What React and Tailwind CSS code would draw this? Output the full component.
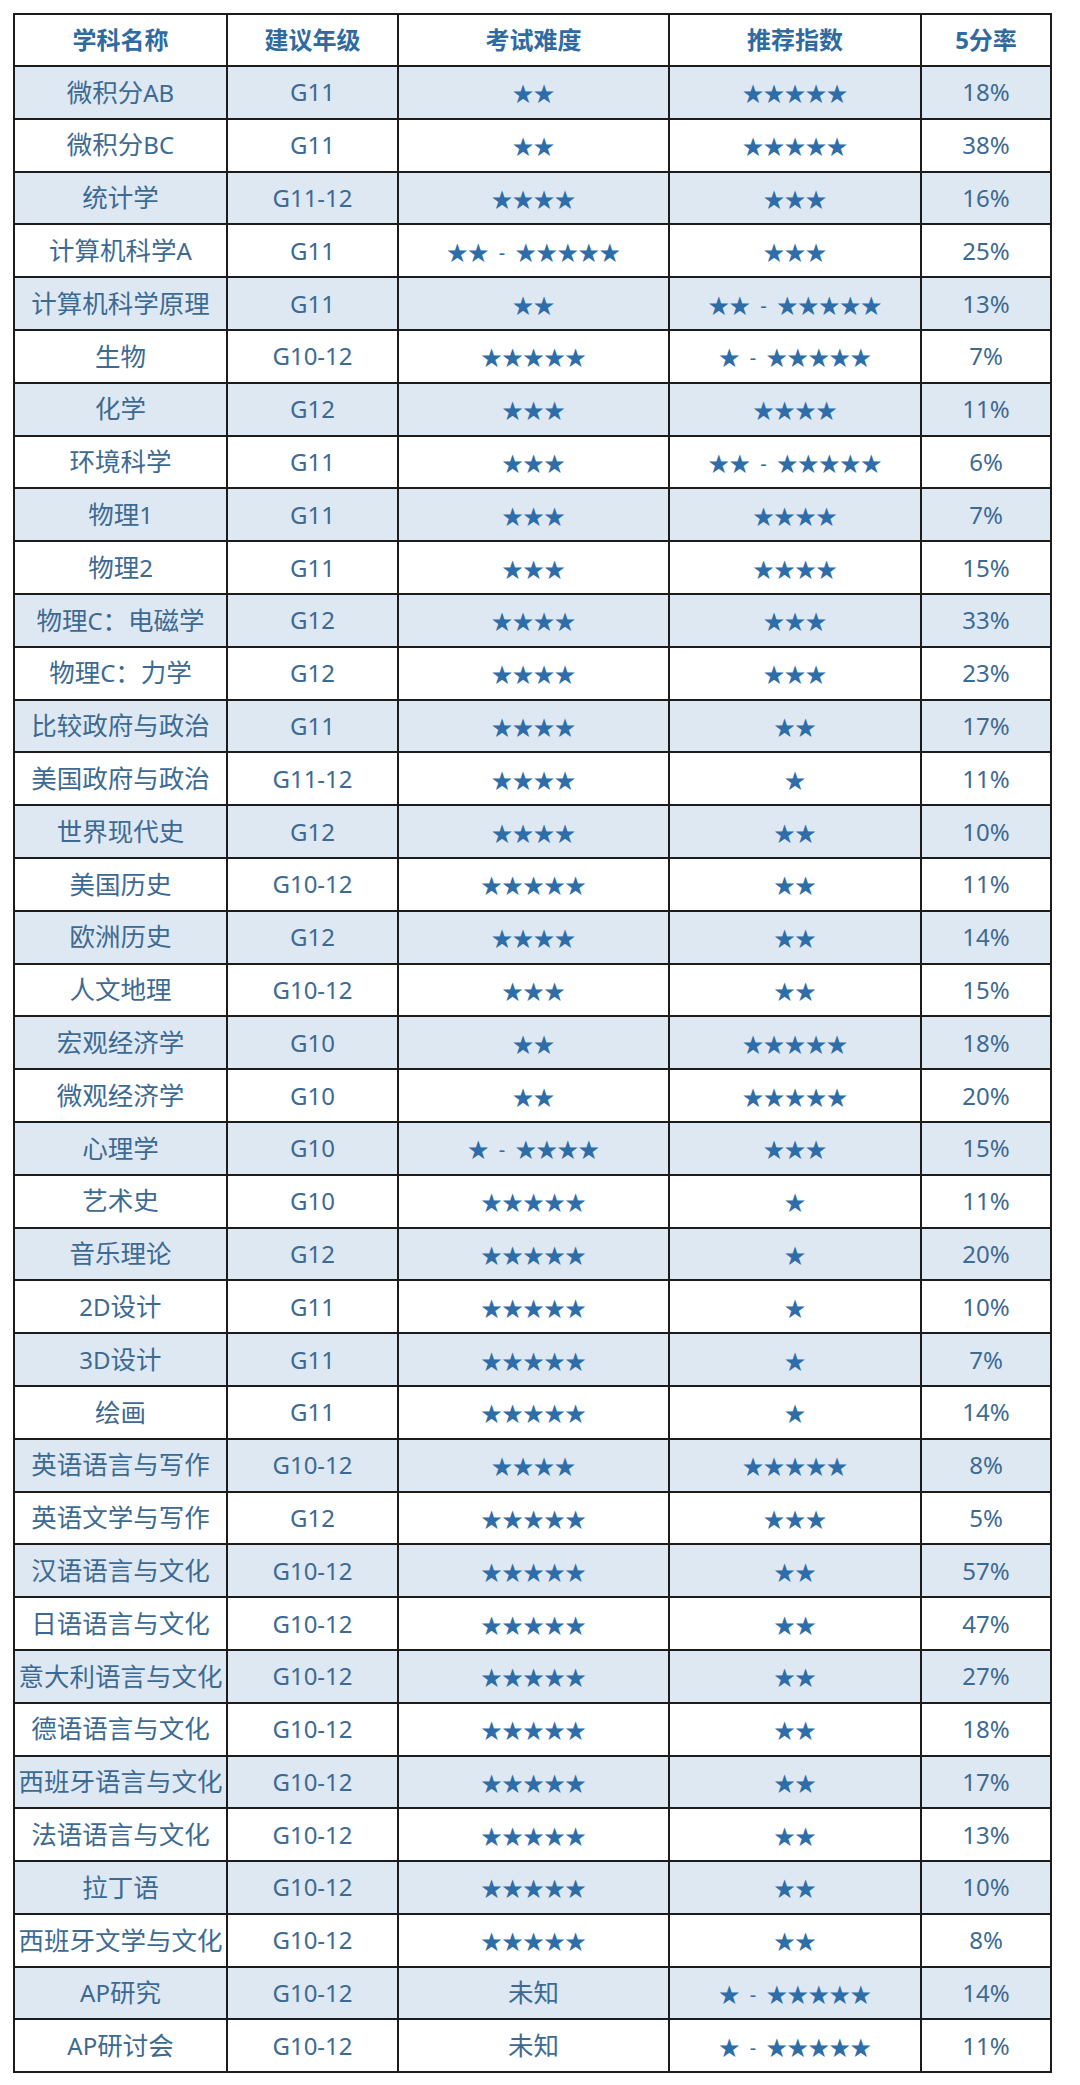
const rows = [
  ["微积分AB", "G11", "★★", "★★★★★", "18%"],
  ["微积分BC", "G11", "★★", "★★★★★", "38%"],
  ["统计学", "G11-12", "★★★★", "★★★", "16%"],
  ["计算机科学A", "G11", "★★ - ★★★★★", "★★★", "25%"],
  ["计算机科学原理", "G11", "★★", "★★ - ★★★★★", "13%"],
  ["生物", "G10-12", "★★★★★", "★ - ★★★★★", "7%"],
  ["化学", "G12", "★★★", "★★★★", "11%"],
  ["环境科学", "G11", "★★★", "★★ - ★★★★★", "6%"],
  ["物理1", "G11", "★★★", "★★★★", "7%"],
  ["物理2", "G11", "★★★", "★★★★", "15%"],
  ["物理C：电磁学", "G12", "★★★★", "★★★", "33%"],
  ["物理C：力学", "G12", "★★★★", "★★★", "23%"],
  ["比较政府与政治", "G11", "★★★★", "★★", "17%"],
  ["美国政府与政治", "G11-12", "★★★★", "★", "11%"],
  ["世界现代史", "G12", "★★★★", "★★", "10%"],
  ["美国历史", "G10-12", "★★★★★", "★★", "11%"],
  ["欧洲历史", "G12", "★★★★", "★★", "14%"],
  ["人文地理", "G10-12", "★★★", "★★", "15%"],
  ["宏观经济学", "G10", "★★", "★★★★★", "18%"],
  ["微观经济学", "G10", "★★", "★★★★★", "20%"],
  ["心理学", "G10", "★ - ★★★★", "★★★", "15%"],
  ["艺术史", "G10", "★★★★★", "★", "11%"],
  ["音乐理论", "G12", "★★★★★", "★", "20%"],
  ["2D设计", "G11", "★★★★★", "★", "10%"],
  ["3D设计", "G11", "★★★★★", "★", "7%"],
  ["绘画", "G11", "★★★★★", "★", "14%"],
  ["英语语言与写作", "G10-12", "★★★★", "★★★★★", "8%"],
  ["英语文学与写作", "G12", "★★★★★", "★★★", "5%"],
  ["汉语语言与文化", "G10-12", "★★★★★", "★★", "57%"],
  ["日语语言与文化", "G10-12", "★★★★★", "★★", "47%"],
  ["意大利语言与文化", "G10-12", "★★★★★", "★★", "27%"],
  ["德语语言与文化", "G10-12", "★★★★★", "★★", "18%"],
  ["西班牙语言与文化", "G10-12", "★★★★★", "★★", "17%"],
  ["法语语言与文化", "G10-12", "★★★★★", "★★", "13%"],
  ["拉丁语", "G10-12", "★★★★★", "★★", "10%"],
  ["西班牙文学与文化", "G10-12", "★★★★★", "★★", "8%"],
  ["AP研究", "G10-12", "未知", "★ - ★★★★★", "14%"],
  ["AP研讨会", "G10-12", "未知", "★ - ★★★★★", "11%"],
];

const headers = ["学科名称", "建议年级", "考试难度", "推荐指数", "5分率"];

// stars are a bit smaller, and the chinese runs a touch bigger than the latin
const Cell = ({ value }) => {
  if (value.includes("★")) {
    const [a, b] = value.split(" - ");
    return (
      <span className="text-[21px] text-[#2e6da8] whitespace-nowrap">
        {a}
        {b && (
          <>
            <span className="px-[10px] text-[20px]">-</span>
            {b}
          </>
        )}
      </span>
    );
  }
  return (
    <span>
      {value.split(/([\u4e00-\u9fff：]+)/).map((part, k) =>
        /[\u4e00-\u9fff：]/.test(part) ? (
          <span key={k} className="text-[25.5px]">{part}</span>
        ) : (
          part
        )
      )}
    </span>
  );
};

export default function App() {
  return (
    <div className="w-[1080px] min-h-[2085px] bg-white pt-[13px] pl-[13px]">
      <table
        className="table-fixed w-[1037px] border-collapse border-2 border-[#1c1c1c] text-[24px] text-[#3d6a92]"
        style={{ fontFamily: '"Noto Sans", "Noto Sans CJK SC", sans-serif' }}
      >
        <colgroup>
          <col className="w-[213px]" />
          <col className="w-[171px]" />
          <col className="w-[271px]" />
          <col className="w-[252px]" />
          <col className="w-[130px]" />
        </colgroup>
        <thead>
          <tr className="h-[52px]">
            {headers.map((h) => (
              <th key={h} className="border-2 border-[#1c1c1c] font-bold text-[#2f6aa0] text-center p-0">
                {h}
              </th>
            ))}
          </tr>
        </thead>
        <tbody>
          {rows.map((r, i) => (
            <tr key={r[0]} className={`h-[52.8px] ${i % 2 === 0 ? "bg-[#dde8f3]" : "bg-white"}`}>
              {r.map((v, j) => (
                <td key={j} className="border-2 border-[#1c1c1c] text-center p-0 leading-none whitespace-nowrap">
                  <Cell value={v} />
                </td>
              ))}
            </tr>
          ))}
        </tbody>
      </table>
    </div>
  );
}
